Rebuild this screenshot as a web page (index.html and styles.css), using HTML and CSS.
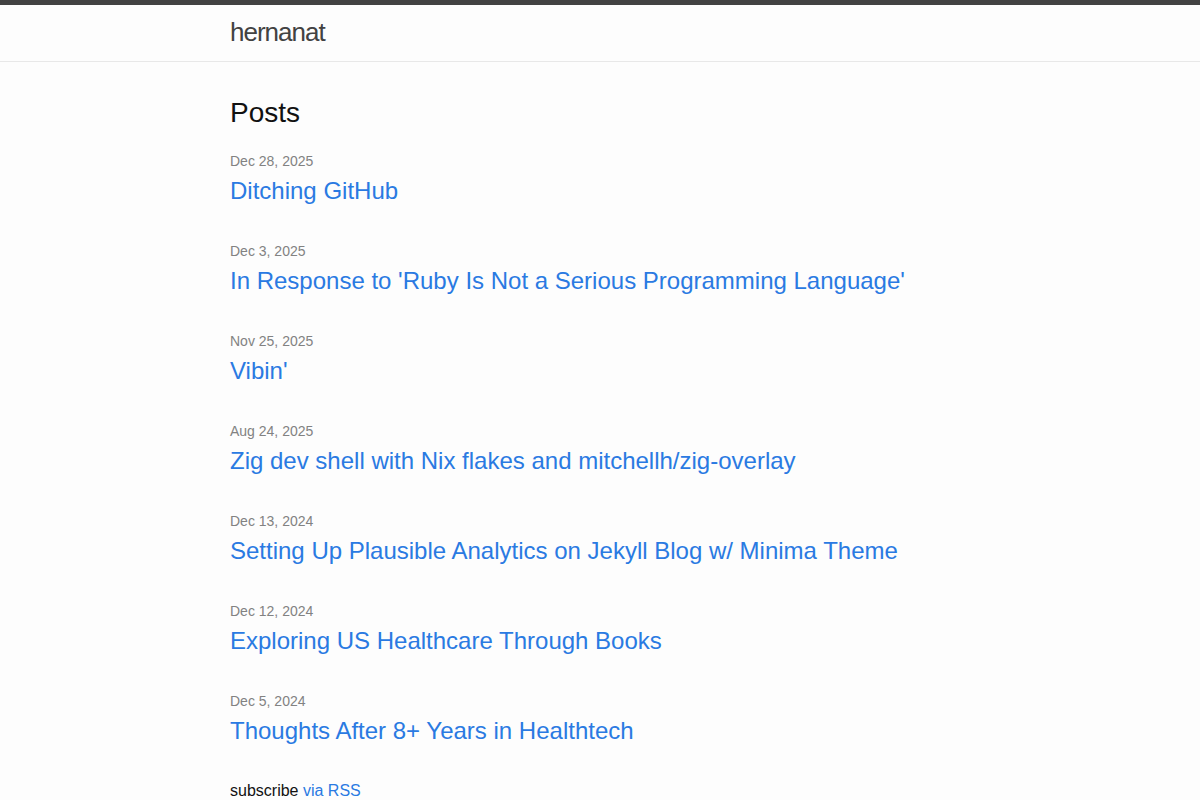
FILE: index.html
```html
<!DOCTYPE html>
<html lang="en">
<head>
    <meta charset="UTF-8">
    <meta name="viewport" content="width=device-width, initial-scale=1.0">
    <title>hernanat</title>
    <link rel="stylesheet" href="styles.css">
</head>
<body>
    <header class="site-header">
        <div class="wrapper">
            <a class="site-title" href="#">hernanat</a>
        </div>
    </header>

    <main class="page-content">
        <div class="wrapper">
            <h2 class="post-list-heading">Posts</h2>
            <ul class="post-list">
                <li>
                    <span class="post-meta">Dec 28, 2025</span>
                    <h3><a class="post-link" href="#">Ditching GitHub</a></h3>
                </li>
                <li>
                    <span class="post-meta">Dec 3, 2025</span>
                    <h3><a class="post-link" href="#">In Response to 'Ruby Is Not a Serious Programming Language'</a></h3>
                </li>
                <li>
                    <span class="post-meta">Nov 25, 2025</span>
                    <h3><a class="post-link" href="#">Vibin'</a></h3>
                </li>
                <li>
                    <span class="post-meta">Aug 24, 2025</span>
                    <h3><a class="post-link" href="#">Zig dev shell with Nix flakes and mitchellh/zig-overlay</a></h3>
                </li>
                <li>
                    <span class="post-meta">Dec 13, 2024</span>
                    <h3><a class="post-link" href="#">Setting Up Plausible Analytics on Jekyll Blog w/ Minima Theme</a></h3>
                </li>
                <li>
                    <span class="post-meta">Dec 12, 2024</span>
                    <h3><a class="post-link" href="#">Exploring US Healthcare Through Books</a></h3>
                </li>
                <li>
                    <span class="post-meta">Dec 5, 2024</span>
                    <h3><a class="post-link" href="#">Thoughts After 8+ Years in Healthtech</a></h3>
                </li>
            </ul>
            <p class="rss-subscribe">subscribe <a href="#">via RSS</a></p>
        </div>
    </main>
</body>
</html>
```

FILE: styles.css
```css
body {
    margin: 0;
    font-family: "Liberation Sans", Helvetica, Arial, sans-serif;
    font-size: 16px;
    line-height: 1.5;
    color: #111111;
    background-color: #fdfdfd;
}

a {
    color: #2a7ae2;
    text-decoration: none;
}

.wrapper {
    max-width: 740px;
    margin: 0 auto;
    padding: 0 30px;
}

.site-header {
    border-top: 5px solid #424242;
    border-bottom: 1px solid #e8e8e8;
    min-height: 56px;
}

.site-title {
    display: inline-block;
    font-size: 26px;
    font-weight: 300;
    line-height: 54px;
    letter-spacing: -1px;
    color: #424242;
}

.page-content {
    padding: 30px 0;
}

.post-list-heading {
    margin: 0 0 15px;
    font-size: 28px;
    font-weight: 400;
    line-height: 42px;
}

.post-list {
    margin: 0;
    padding: 0;
    list-style: none;
}

.post-list li {
    margin-bottom: 30px;
}

.post-meta {
    display: block;
    padding-top: 2px;
    font-size: 14px;
    line-height: 21px;
    color: #828282;
}

.post-list h3 {
    margin: 1px 0 0;
    font-weight: 400;
}

.post-link {
    display: block;
    font-size: 24px;
    line-height: 36px;
}

.rss-subscribe {
    margin: 0;
    line-height: 24px;
}
```
